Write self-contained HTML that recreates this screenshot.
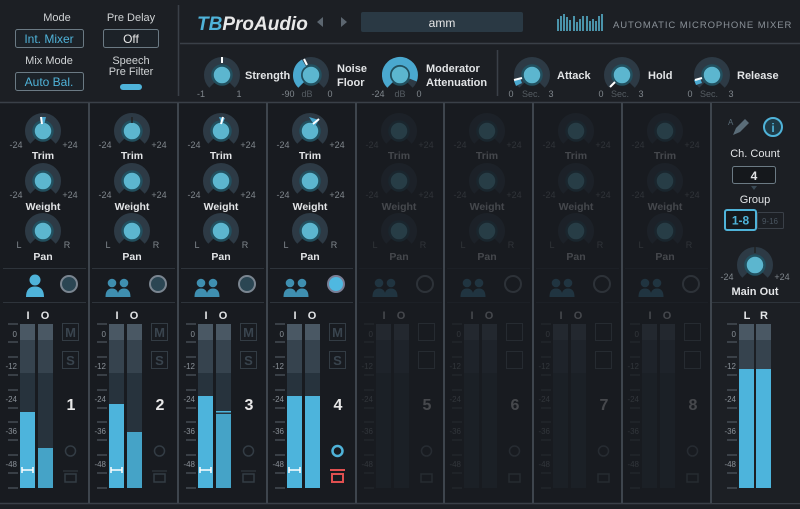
<!DOCTYPE html>
<html><head><meta charset="utf-8"><style>
html,body{margin:0;padding:0;background:#1c1f24;}
svg{display:block;font-family:"Liberation Sans",sans-serif;}
.l{font-size:10.5px;font-weight:bold;fill:#e2e4e6;text-anchor:middle}
.ls{font-size:11px;font-weight:bold;fill:#e2e4e6;text-anchor:start}
.s{font-size:9px;fill:#80878d;text-anchor:middle}
.sc{font-size:8px;fill:#8a9198;text-anchor:end}
.n{font-size:16px;font-weight:bold;fill:#e8e8e8;text-anchor:middle}
</style></head><body>
<svg width="800" height="509" viewBox="0 0 800 509" xmlns="http://www.w3.org/2000/svg">
<defs>
<g id="kb"><path d="M-9.9 9.9A14 14 0 1 1 9.9 9.9" fill="none" stroke="#2d3a45" stroke-width="8"/><circle r="9.5" fill="#5cb6cf" stroke="#22505f" stroke-width="2.5"/></g>
<g id="met">
<rect x="20" y="324" width="15" height="164" fill="#27333d"/><rect x="20" y="324" width="15" height="16" fill="#4a5864"/><rect x="20" y="340" width="15" height="33" fill="#36434e"/>
<rect x="38" y="324" width="15" height="164" fill="#27333d"/><rect x="38" y="324" width="15" height="16" fill="#4a5864"/><rect x="38" y="340" width="15" height="33" fill="#36434e"/>
<path d="M8 324h10M8 342h10M8 357h10M8 375h10M8 390h10M8 408h10M8 422h10M8 440h10M8 455h10M8 473h10M8 488h10" stroke="#5a636b" stroke-width="1"/>
</g>
<g id="two"><circle cx="23" cy="283" r="4.3"/><circle cx="35" cy="283" r="4.3"/><path d="M16.5 297Q16.5 288.5 23 288.5Q29.5 288.5 29.5 297Z M28.5 297Q28.5 288.5 35 288.5Q41.5 288.5 41.5 297Z"/></g>
</defs>
<rect width="800" height="509" fill="#1c1f24"/>
<rect x="0" y="103" width="800" height="400" fill="#181b20"/>

<!-- header left -->
<text x="57" y="21" class="l" style="fill:#cfd2d4;font-weight:normal;font-size:11px">Mode</text>
<rect x="15.5" y="29.5" width="68" height="18" rx="2" fill="#1c2228" stroke="#6b7a84"/>
<text x="49" y="43" style="font-size:12px;fill:#4fb3d9;text-anchor:middle">Int. Mixer</text>
<text x="49" y="64" class="l" style="fill:#cfd2d4;font-weight:normal;font-size:11px">Mix Mode</text>
<rect x="15.5" y="72.5" width="68" height="18" rx="2" fill="#1c2228" stroke="#6b7a84"/>
<text x="49" y="86" style="font-size:12px;fill:#4fb3d9;text-anchor:middle">Auto Bal.</text>
<text x="131" y="21" class="l" style="fill:#cfd2d4;font-weight:normal;font-size:11px">Pre Delay</text>
<rect x="103.5" y="29.5" width="55" height="18" rx="2" fill="#1c2228" stroke="#6b7a84"/>
<text x="131" y="43" style="font-size:12px;fill:#e8e8e8;text-anchor:middle">Off</text>
<text x="131" y="64" class="l" style="fill:#cfd2d4;font-weight:normal;font-size:11px">Speech</text>
<text x="131" y="75" class="l" style="fill:#cfd2d4;font-weight:normal;font-size:11px">Pre Filter</text>
<rect x="120" y="84" width="22" height="6" rx="3" fill="#4fb3d9"/>
<line x1="178.5" y1="5" x2="178.5" y2="96" stroke="#3a4048" stroke-width="1.5"/>

<!-- title bar -->
<text x="197" y="30" style="font-size:19px;font-weight:bold;font-style:italic;fill:#e8e8e8"><tspan fill="#4fb3d9">TB</tspan>ProAudio</text>
<path d="M323 17v10l-6-5z" fill="#5c6670"/><path d="M341 17v10l6-5z" fill="#5c6670"/>
<rect x="361" y="12" width="162" height="20" rx="2" fill="#2a3944"/>
<text x="442" y="27" style="font-size:12px;fill:#e8e8e8;text-anchor:middle">amm</text>
<g fill="#4a93aa"><rect x="557" y="19" width="2" height="12"/><rect x="560" y="16" width="2" height="15"/><rect x="563" y="14" width="2" height="17"/><rect x="566" y="17" width="2" height="14"/><rect x="569" y="20" width="2" height="11"/><rect x="573" y="16" width="2" height="15"/><rect x="576" y="22" width="2" height="9"/><rect x="579" y="19" width="2" height="12"/><rect x="582" y="16" width="2" height="15"/><rect x="586" y="16" width="2" height="15"/><rect x="589" y="21" width="2" height="10"/><rect x="592" y="19" width="2" height="12"/><rect x="595" y="21" width="2" height="10"/><rect x="598" y="16" width="2" height="15"/><rect x="601" y="14" width="2" height="17"/></g>
<text x="613" y="28" style="font-size:9.5px;fill:#8a9198;letter-spacing:0.9px">AUTOMATIC MICROPHONE MIXER</text>
<line x1="180" y1="43.5" x2="800" y2="43.5" stroke="#3a4048" stroke-width="1.5"/>
<line x1="497.5" y1="50" x2="497.5" y2="96" stroke="#3a4048" stroke-width="1.5"/>

<!-- header knobs -->
<use href="#kb" x="222" y="75"/><line x1="222" y1="57" x2="222" y2="63" stroke="#fff" stroke-width="2"/>
<text x="245" y="79" class="ls">Strength</text>
<text x="201" y="97" class="s">-1</text><text x="239" y="97" class="s">1</text>
<use href="#kb" x="311" y="75"/><path d="M301.1 84.9A14 14 0 0 1 304 62.9" fill="none" stroke="#4aa8cf" stroke-width="8"/><line x1="304" y1="59" x2="307" y2="65" stroke="#fff" stroke-width="2"/>
<text x="337" y="72" class="ls">Noise</text><text x="337" y="86" class="ls">Floor</text>
<text x="288" y="97" class="s">-90</text><text x="307" y="97" class="s" style="fill:#555c62">dB</text><text x="330" y="97" class="s">0</text>
<use href="#kb" x="400" y="75"/><path d="M390.1 84.9A14 14 0 1 1 413 80" fill="none" stroke="#4aa8cf" stroke-width="8"/>
<text x="426" y="72" class="ls">Moderator</text><text x="426" y="86" class="ls">Attenuation</text>
<text x="378" y="97" class="s">-24</text><text x="400" y="97" class="s" style="fill:#555c62">dB</text><text x="419" y="97" class="s">0</text>
<use href="#kb" x="532" y="75"/><path d="M520 78l-6 3 2 5 6-3z" fill="#4aa8cf"/><line x1="514" y1="80" x2="522" y2="78" stroke="#fff" stroke-width="2"/>
<text x="557" y="79" class="ls">Attack</text>
<text x="511" y="97" class="s">0</text><text x="531" y="97" class="s" style="fill:#555c62">Sec.</text><text x="551" y="97" class="s">3</text>
<use href="#kb" x="622" y="75"/><line x1="610" y1="87" x2="615" y2="82" stroke="#fff" stroke-width="2"/>
<text x="648" y="79" class="ls">Hold</text>
<text x="601" y="97" class="s">0</text><text x="620" y="97" class="s" style="fill:#555c62">Sec.</text><text x="641" y="97" class="s">3</text>
<use href="#kb" x="712" y="75"/><path d="M700 78l-6 2 2 5 6-2z" fill="#4aa8cf"/><line x1="695" y1="80" x2="702" y2="78" stroke="#fff" stroke-width="2"/>
<text x="737" y="79" class="ls">Release</text>
<text x="690" y="97" class="s">0</text><text x="709" y="97" class="s" style="fill:#555c62">Sec.</text><text x="731" y="97" class="s">3</text>

<line x1="0" y1="102.5" x2="800" y2="102.5" stroke="#3a4048" stroke-width="1.5"/>
<line x1="0" y1="503.5" x2="800" y2="503.5" stroke="#3a4048" stroke-width="1.5"/>
<g stroke="#3e454d" stroke-width="2"><line x1="89" y1="103" x2="89" y2="503"/><line x1="178" y1="103" x2="178" y2="503"/><line x1="267" y1="103" x2="267" y2="503"/><line x1="356" y1="103" x2="356" y2="503"/><line x1="444" y1="103" x2="444" y2="503"/><line x1="533" y1="103" x2="533" y2="503"/><line x1="622" y1="103" x2="622" y2="503"/><line x1="711" y1="103" x2="711" y2="503"/></g>

<!-- STRIP 1 -->
<g transform="translate(0,0)">
<use href="#kb" x="43" y="131"/><path d="M40 117l6 0 -2 8z" fill="#4aa8cf"/><line x1="41" y1="117" x2="42" y2="124" stroke="#fff" stroke-width="2"/>
<text x="16" y="148" class="s">-24</text><text x="70" y="148" class="s">+24</text><text x="43" y="159" class="l">Trim</text>
<use href="#kb" x="43" y="181"/><text x="16" y="198" class="s">-24</text><text x="70" y="198" class="s">+24</text><text x="43" y="210" class="l">Weight</text>
<use href="#kb" x="43" y="231"/><text x="19" y="248" class="s">L</text><text x="67" y="248" class="s">R</text><text x="43" y="260" class="l">Pan</text>
<path d="M3 268.5h83M3 302.5h83" stroke="#2e343b"/>
<g fill="#4fb3d9"><circle cx="35" cy="280" r="5.5"/><path d="M26 297Q26 286.5 35 286.5Q44 286.5 44 297Z"/></g>
<circle cx="69" cy="284" r="8" fill="#2b4653" stroke="#7a8590" stroke-width="2"/>
<text x="28" y="319" class="l" style="font-size:11px">I</text><text x="45" y="319" class="l" style="font-size:11px">O</text>
<use href="#met"/>
<text x="17" y="337" class="sc">0</text><text x="17" y="369" class="sc">-12</text><text x="17" y="402" class="sc">-24</text><text x="17" y="434" class="sc">-36</text><text x="17" y="467" class="sc">-48</text>
<rect x="20" y="412" width="15" height="76" fill="#4db4dc"/><rect x="38" y="448" width="15" height="40" fill="#45a3c7"/>
<path d="M22 470h11M22 467v6M33 467v6" stroke="#fff" stroke-width="1.5"/>
<rect x="62.5" y="323.5" width="16" height="17" fill="none" stroke="#333c44"/><text x="70.5" y="337" class="n" style="font-size:13px;fill:#39444e">M</text>
<rect x="62.5" y="351.5" width="16" height="17" fill="none" stroke="#333c44"/><text x="70.5" y="365" class="n" style="font-size:13px;fill:#39444e">S</text>
<text x="71" y="410" class="n">1</text>
<circle cx="70.5" cy="451" r="5" fill="none" stroke="#333c44" stroke-width="1.5"/>
<path d="M63 471h15" stroke="#333c44"/><rect x="65" y="474" width="11" height="8" fill="none" stroke="#333c44" stroke-width="1.5"/>
</g>

<!-- STRIP 2 -->
<g transform="translate(89,0)">
<use href="#kb" x="43" y="131"/><line x1="43" y1="117" x2="43" y2="123" stroke="#222" stroke-width="1.5"/>
<text x="16" y="148" class="s">-24</text><text x="70" y="148" class="s">+24</text><text x="43" y="159" class="l">Trim</text>
<use href="#kb" x="43" y="181"/><text x="16" y="198" class="s">-24</text><text x="70" y="198" class="s">+24</text><text x="43" y="210" class="l">Weight</text>
<use href="#kb" x="43" y="231"/><text x="19" y="248" class="s">L</text><text x="67" y="248" class="s">R</text><text x="43" y="260" class="l">Pan</text>
<path d="M3 268.5h83M3 302.5h83" stroke="#2e343b"/>
<use href="#two" fill="#3f8fb0"/>
<circle cx="69" cy="284" r="8" fill="#2b4653" stroke="#7a8590" stroke-width="2"/>
<text x="28" y="319" class="l" style="font-size:11px">I</text><text x="45" y="319" class="l" style="font-size:11px">O</text>
<use href="#met"/>
<text x="17" y="337" class="sc">0</text><text x="17" y="369" class="sc">-12</text><text x="17" y="402" class="sc">-24</text><text x="17" y="434" class="sc">-36</text><text x="17" y="467" class="sc">-48</text>
<rect x="20" y="404" width="15" height="84" fill="#4db4dc"/><rect x="38" y="432" width="15" height="56" fill="#45a3c7"/>
<path d="M22 470h11M22 467v6M33 467v6" stroke="#fff" stroke-width="1.5"/>
<rect x="62.5" y="323.5" width="16" height="17" fill="none" stroke="#333c44"/><text x="70.5" y="337" class="n" style="font-size:13px;fill:#39444e">M</text>
<rect x="62.5" y="351.5" width="16" height="17" fill="none" stroke="#333c44"/><text x="70.5" y="365" class="n" style="font-size:13px;fill:#39444e">S</text>
<text x="71" y="410" class="n">2</text>
<circle cx="70.5" cy="451" r="5" fill="none" stroke="#333c44" stroke-width="1.5"/>
<path d="M63 471h15" stroke="#333c44"/><rect x="65" y="474" width="11" height="8" fill="none" stroke="#333c44" stroke-width="1.5"/>
</g>

<!-- STRIP 3 -->
<g transform="translate(178,0)">
<use href="#kb" x="43" y="131"/><path d="M41 117l6 1 -3 7z" fill="#4aa8cf"/><line x1="45" y1="117" x2="43" y2="124" stroke="#fff" stroke-width="2"/>
<text x="16" y="148" class="s">-24</text><text x="70" y="148" class="s">+24</text><text x="43" y="159" class="l">Trim</text>
<use href="#kb" x="43" y="181"/><text x="16" y="198" class="s">-24</text><text x="70" y="198" class="s">+24</text><text x="43" y="210" class="l">Weight</text>
<use href="#kb" x="43" y="231"/><text x="19" y="248" class="s">L</text><text x="67" y="248" class="s">R</text><text x="43" y="260" class="l">Pan</text>
<path d="M3 268.5h83M3 302.5h83" stroke="#2e343b"/>
<use href="#two" fill="#3f8fb0"/>
<circle cx="69" cy="284" r="8" fill="#2b4653" stroke="#7a8590" stroke-width="2"/>
<text x="28" y="319" class="l" style="font-size:11px">I</text><text x="45" y="319" class="l" style="font-size:11px">O</text>
<use href="#met"/>
<text x="17" y="337" class="sc">0</text><text x="17" y="369" class="sc">-12</text><text x="17" y="402" class="sc">-24</text><text x="17" y="434" class="sc">-36</text><text x="17" y="467" class="sc">-48</text>
<rect x="20" y="396" width="15" height="92" fill="#4db4dc"/><rect x="38" y="414" width="15" height="74" fill="#45a3c7"/><rect x="38" y="411" width="15" height="1.5" fill="#4db4dc"/>
<path d="M22 470h11M22 467v6M33 467v6" stroke="#fff" stroke-width="1.5"/>
<rect x="62.5" y="323.5" width="16" height="17" fill="none" stroke="#333c44"/><text x="70.5" y="337" class="n" style="font-size:13px;fill:#39444e">M</text>
<rect x="62.5" y="351.5" width="16" height="17" fill="none" stroke="#333c44"/><text x="70.5" y="365" class="n" style="font-size:13px;fill:#39444e">S</text>
<text x="71" y="410" class="n">3</text>
<circle cx="70.5" cy="451" r="5" fill="none" stroke="#333c44" stroke-width="1.5"/>
<path d="M63 471h15" stroke="#333c44"/><rect x="65" y="474" width="11" height="8" fill="none" stroke="#333c44" stroke-width="1.5"/>
</g>

<!-- STRIP 4 -->
<g transform="translate(267,0)">
<use href="#kb" x="43" y="131"/><path d="M42 117l10 3 -4 6z" fill="#4aa8cf"/><line x1="52" y1="119" x2="46" y2="124" stroke="#fff" stroke-width="2"/>
<text x="16" y="148" class="s">-24</text><text x="70" y="148" class="s">+24</text><text x="43" y="159" class="l">Trim</text>
<use href="#kb" x="43" y="181"/><text x="16" y="198" class="s">-24</text><text x="70" y="198" class="s">+24</text><text x="43" y="210" class="l">Weight</text>
<use href="#kb" x="43" y="231"/><text x="19" y="248" class="s">L</text><text x="67" y="248" class="s">R</text><text x="43" y="260" class="l">Pan</text>
<path d="M3 268.5h83M3 302.5h83" stroke="#2e343b"/>
<use href="#two" fill="#3f8fb0"/>
<circle cx="69" cy="284" r="8" fill="#4fb8e0" stroke="#7a7f96" stroke-width="2"/>
<text x="28" y="319" class="l" style="font-size:11px">I</text><text x="45" y="319" class="l" style="font-size:11px">O</text>
<use href="#met"/>
<text x="17" y="337" class="sc">0</text><text x="17" y="369" class="sc">-12</text><text x="17" y="402" class="sc">-24</text><text x="17" y="434" class="sc">-36</text><text x="17" y="467" class="sc">-48</text>
<rect x="20" y="396" width="15" height="92" fill="#4db4dc"/><rect x="38" y="396" width="15" height="92" fill="#4db4dc"/>
<path d="M22 470h11M22 467v6M33 467v6" stroke="#fff" stroke-width="1.5"/>
<rect x="62.5" y="323.5" width="16" height="17" fill="none" stroke="#333c44"/><text x="70.5" y="337" class="n" style="font-size:13px;fill:#39444e">M</text>
<rect x="62.5" y="351.5" width="16" height="17" fill="none" stroke="#333c44"/><text x="70.5" y="365" class="n" style="font-size:13px;fill:#39444e">S</text>
<text x="71" y="410" class="n">4</text>
<circle cx="70.5" cy="451" r="5" fill="none" stroke="#4fb3d9" stroke-width="2.5"/>
<path d="M63 470h15" stroke="#e05050" stroke-width="2"/><rect x="65" y="474" width="11" height="8" fill="none" stroke="#e05050" stroke-width="2"/>
</g>

<!-- STRIPS 5-8 dimmed -->
<g opacity="0.22">
<g transform="translate(356,0)">
<use href="#kb" x="43" y="131"/><text x="16" y="148" class="s">-24</text><text x="70" y="148" class="s">+24</text><text x="43" y="159" class="l">Trim</text>
<use href="#kb" x="43" y="181"/><text x="16" y="198" class="s">-24</text><text x="70" y="198" class="s">+24</text><text x="43" y="210" class="l">Weight</text>
<use href="#kb" x="43" y="231"/><text x="19" y="248" class="s">L</text><text x="67" y="248" class="s">R</text><text x="43" y="260" class="l">Pan</text>
<path d="M3 268.5h83M3 302.5h83" stroke="#2e343b"/><use href="#two" fill="#3f8fb0"/><circle cx="69" cy="284" r="8" fill="none" stroke="#7a8590" stroke-width="2"/>
<text x="28" y="319" class="l" style="font-size:11px">I</text><text x="45" y="319" class="l" style="font-size:11px">O</text><use href="#met"/>
<text x="17" y="337" class="sc">0</text><text x="17" y="369" class="sc">-12</text><text x="17" y="402" class="sc">-24</text><text x="17" y="434" class="sc">-36</text><text x="17" y="467" class="sc">-48</text>
<rect x="62.5" y="323.5" width="16" height="17" fill="none" stroke="#5a6570"/><rect x="62.5" y="351.5" width="16" height="17" fill="none" stroke="#5a6570"/>
<text x="71" y="410" class="n">5</text><circle cx="70.5" cy="451" r="5" fill="none" stroke="#5a6570" stroke-width="1.5"/><rect x="65" y="474" width="11" height="8" fill="none" stroke="#5a6570" stroke-width="1.5"/>
</g>
<g transform="translate(444,0)">
<use href="#kb" x="43" y="131"/><text x="16" y="148" class="s">-24</text><text x="70" y="148" class="s">+24</text><text x="43" y="159" class="l">Trim</text>
<use href="#kb" x="43" y="181"/><text x="16" y="198" class="s">-24</text><text x="70" y="198" class="s">+24</text><text x="43" y="210" class="l">Weight</text>
<use href="#kb" x="43" y="231"/><text x="19" y="248" class="s">L</text><text x="67" y="248" class="s">R</text><text x="43" y="260" class="l">Pan</text>
<path d="M3 268.5h83M3 302.5h83" stroke="#2e343b"/><use href="#two" fill="#3f8fb0"/><circle cx="69" cy="284" r="8" fill="none" stroke="#7a8590" stroke-width="2"/>
<text x="28" y="319" class="l" style="font-size:11px">I</text><text x="45" y="319" class="l" style="font-size:11px">O</text><use href="#met"/>
<text x="17" y="337" class="sc">0</text><text x="17" y="369" class="sc">-12</text><text x="17" y="402" class="sc">-24</text><text x="17" y="434" class="sc">-36</text><text x="17" y="467" class="sc">-48</text>
<rect x="62.5" y="323.5" width="16" height="17" fill="none" stroke="#5a6570"/><rect x="62.5" y="351.5" width="16" height="17" fill="none" stroke="#5a6570"/>
<text x="71" y="410" class="n">6</text><circle cx="70.5" cy="451" r="5" fill="none" stroke="#5a6570" stroke-width="1.5"/><rect x="65" y="474" width="11" height="8" fill="none" stroke="#5a6570" stroke-width="1.5"/>
</g>
<g transform="translate(533,0)">
<use href="#kb" x="43" y="131"/><text x="16" y="148" class="s">-24</text><text x="70" y="148" class="s">+24</text><text x="43" y="159" class="l">Trim</text>
<use href="#kb" x="43" y="181"/><text x="16" y="198" class="s">-24</text><text x="70" y="198" class="s">+24</text><text x="43" y="210" class="l">Weight</text>
<use href="#kb" x="43" y="231"/><text x="19" y="248" class="s">L</text><text x="67" y="248" class="s">R</text><text x="43" y="260" class="l">Pan</text>
<path d="M3 268.5h83M3 302.5h83" stroke="#2e343b"/><use href="#two" fill="#3f8fb0"/><circle cx="69" cy="284" r="8" fill="none" stroke="#7a8590" stroke-width="2"/>
<text x="28" y="319" class="l" style="font-size:11px">I</text><text x="45" y="319" class="l" style="font-size:11px">O</text><use href="#met"/>
<text x="17" y="337" class="sc">0</text><text x="17" y="369" class="sc">-12</text><text x="17" y="402" class="sc">-24</text><text x="17" y="434" class="sc">-36</text><text x="17" y="467" class="sc">-48</text>
<rect x="62.5" y="323.5" width="16" height="17" fill="none" stroke="#5a6570"/><rect x="62.5" y="351.5" width="16" height="17" fill="none" stroke="#5a6570"/>
<text x="71" y="410" class="n">7</text><circle cx="70.5" cy="451" r="5" fill="none" stroke="#5a6570" stroke-width="1.5"/><rect x="65" y="474" width="11" height="8" fill="none" stroke="#5a6570" stroke-width="1.5"/>
</g>
<g transform="translate(622,0)">
<use href="#kb" x="43" y="131"/><text x="16" y="148" class="s">-24</text><text x="70" y="148" class="s">+24</text><text x="43" y="159" class="l">Trim</text>
<use href="#kb" x="43" y="181"/><text x="16" y="198" class="s">-24</text><text x="70" y="198" class="s">+24</text><text x="43" y="210" class="l">Weight</text>
<use href="#kb" x="43" y="231"/><text x="19" y="248" class="s">L</text><text x="67" y="248" class="s">R</text><text x="43" y="260" class="l">Pan</text>
<path d="M3 268.5h83M3 302.5h83" stroke="#2e343b"/><use href="#two" fill="#3f8fb0"/><circle cx="69" cy="284" r="8" fill="none" stroke="#7a8590" stroke-width="2"/>
<text x="28" y="319" class="l" style="font-size:11px">I</text><text x="45" y="319" class="l" style="font-size:11px">O</text><use href="#met"/>
<text x="17" y="337" class="sc">0</text><text x="17" y="369" class="sc">-12</text><text x="17" y="402" class="sc">-24</text><text x="17" y="434" class="sc">-36</text><text x="17" y="467" class="sc">-48</text>
<rect x="62.5" y="323.5" width="16" height="17" fill="none" stroke="#5a6570"/><rect x="62.5" y="351.5" width="16" height="17" fill="none" stroke="#5a6570"/>
<text x="71" y="410" class="n">8</text><circle cx="70.5" cy="451" r="5" fill="none" stroke="#5a6570" stroke-width="1.5"/><rect x="65" y="474" width="11" height="8" fill="none" stroke="#5a6570" stroke-width="1.5"/>
</g>
</g>

<!-- right panel -->
<rect x="712" y="103" width="88" height="400" fill="#1c1f24"/>
<g fill="#5a6c78"><path d="M733 135l3-7 9-9 4 4-9 9z"/><text x="728" y="125" style="font-size:8px;fill:#5a6c78">A</text></g>
<circle cx="773" cy="127" r="9" fill="#1f3a46" stroke="#4fb3d9" stroke-width="2"/>
<text x="773" y="132" style="font-size:12px;font-weight:bold;fill:#4fb3d9;text-anchor:middle">i</text>
<text x="755" y="157" class="l" style="font-weight:normal;font-size:11px">Ch. Count</text>
<rect x="732.5" y="166.5" width="43" height="17" rx="2" fill="#15181c" stroke="#6b7a84"/>
<text x="754" y="180" class="l" style="font-size:12px">4</text>
<path d="M751 186h6l-3 4z" fill="#3a4a56"/>
<text x="755" y="203" class="l" style="font-weight:normal;font-size:11px">Group</text>
<rect x="757.5" y="212.5" width="26" height="16" rx="1" fill="none" stroke="#3a4048"/>
<text x="770" y="224" style="font-size:8px;fill:#4a5560;text-anchor:middle">9-16</text>
<rect x="725" y="210" width="31" height="20" rx="2" fill="#15181c" stroke="#4fb3d9" stroke-width="2"/>
<text x="740.5" y="224.5" style="font-size:12px;font-weight:bold;fill:#4fb3d9;text-anchor:middle">1-8</text>
<use href="#kb" x="755" y="265"/><line x1="755" y1="247" x2="755" y2="253" stroke="#222" stroke-width="1.5"/>
<text x="727" y="280" class="s">-24</text><text x="782" y="280" class="s">+24</text>
<text x="755" y="295" class="l" style="font-size:11px">Main Out</text>
<path d="M712 302.5h88" stroke="#2e343b"/>
<text x="747" y="319" class="l" style="font-size:11px">L</text><text x="764" y="319" class="l" style="font-size:11px">R</text>
<rect x="739" y="324" width="15" height="164" fill="#27333d"/><rect x="739" y="324" width="15" height="16" fill="#4a5864"/><rect x="739" y="340" width="15" height="29" fill="#36434e"/>
<rect x="756" y="324" width="15" height="164" fill="#27333d"/><rect x="756" y="324" width="15" height="16" fill="#4a5864"/><rect x="756" y="340" width="15" height="29" fill="#36434e"/>
<rect x="739" y="369" width="15" height="119" fill="#4db4dc"/><rect x="756" y="369" width="15" height="119" fill="#4db4dc"/>
<path d="M727 324h10M727 342h10M727 357h10M727 375h10M727 390h10M727 408h10M727 422h10M727 440h10M727 455h10M727 473h10M727 488h10" stroke="#5a636b"/>
<text x="736" y="337" class="sc">0</text><text x="736" y="369" class="sc">-12</text><text x="736" y="402" class="sc">-24</text><text x="736" y="434" class="sc">-36</text><text x="736" y="467" class="sc">-48</text>
</svg>
</body></html>
